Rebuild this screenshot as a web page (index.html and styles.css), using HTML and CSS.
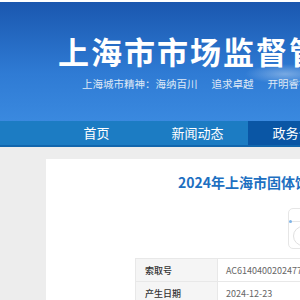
FILE: index.html
```html
<!DOCTYPE html>
<html lang="zh-CN">
<head>
    <meta charset="UTF-8">
    <meta name="viewport" content="width=device-width, initial-scale=1.0">
    <title>上海市市场监督管理局</title>
    <link rel="stylesheet" href="styles.css">
</head>
<body>

    <!-- Banner -->
    <header class="banner">
        <h1 class="site-name">上海市市场监督管理局</h1>
        <p class="motto">上海城市精神：海纳百川<span class="sep"></span>追求卓越<span class="sep"></span>开明睿智<span class="sep"></span>大气谦和</p>
    </header>

    <!-- Main navigation -->
    <nav class="main-nav">
        <a class="nav-item">首页</a>
        <a class="nav-item">新闻动态</a>
        <a class="nav-item active">政务公开</a>
    </nav>

    <!-- Article -->
    <div class="page">
        <div class="card">
            <h2 class="article-title">2024年上海市固体饮料产品质量监督抽查结果</h2>

            <div class="tools">
                <div class="tools-line"></div>
                <div class="tools-circle"></div>
            </div>

            <table class="meta">
                <tr>
                    <td class="label">索取号</td>
                    <td class="value">AC61404002024775</td>
                </tr>
                <tr>
                    <td class="label">产生日期</td>
                    <td class="value">2024-12-23</td>
                </tr>
            </table>
        </div>
    </div>

</body>
</html>
```

FILE: styles.css
```css
/* General body styling */
body {
    margin: 0;
    padding: 0;
    background-color: #ededed;
    font-family: "Noto Sans CJK SC", "Noto Sans", sans-serif;
    overflow: hidden;
    border-top: 2px solid #fff;
}

/* Banner */
.banner {
    height: 119px;
    box-sizing: border-box;
    padding: 33px 0 0 58px;
    background:
        radial-gradient(ellipse 40px 10px at 285px 72px, rgba(255, 255, 255, 0.35), rgba(255, 255, 255, 0)),
        linear-gradient(#1a57af, #2f7bd4 60%, #3a89df);
    white-space: nowrap;
}

.site-name {
    margin: 0;
    font-size: 31px;
    line-height: 32px;
    letter-spacing: 2px;
    font-weight: bold;
    color: #fff;
}

.motto {
    margin: 11px 0 0 24px;
    font-size: 10.5px;
    line-height: 12px;
    color: #dfe9f6;
}

.sep {
    display: inline-block;
    width: 14px;
}

/* Navigation */
.main-nav {
    display: flex;
    height: 24px;
    padding-left: 46px;
    background-color: #1c7cc3;
    border-bottom: 2px solid #1266ad;
    white-space: nowrap;
}

.nav-item {
    flex: 0 0 101px;
    text-align: center;
    line-height: 24px;
    font-size: 13px;
    color: #fff;
}

.nav-item.active {
    background-color: #0a56a5;
}

/* Article card */
.page {
    padding: 12px 0 0 46px;
}

.card {
    background-color: #fff;
    width: 600px;
    height: 400px;
    padding-top: 13px;
}

.article-title {
    margin: 0;
    padding-left: 132px;
    font-size: 14px;
    line-height: 20px;
    font-weight: bold;
    color: #1d6fc1;
    white-space: nowrap;
}

.tools {
    margin: 16px 0 0 242px;
    width: 60px;
    height: 39px;
    border: 1px solid #e6e6e6;
    border-radius: 5px;
}

.tools-line {
    position: relative;
    margin-top: 12px;
    border-top: 1px solid #e6e6e6;
}

.tools-line::before {
    content: "";
    position: absolute;
    left: 0;
    top: -2px;
    width: 3px;
    height: 3px;
    border-radius: 50%;
    background-color: #7fb4e6;
}

.tools-circle {
    margin: 4px 0 0 4px;
    width: 18px;
    height: 18px;
    border: 1px solid #e0e0e0;
    border-radius: 50%;
}

/* Meta table */
.meta {
    margin: 9px 0 0 89px;
    border-collapse: collapse;
    font-size: 9px;
    white-space: nowrap;
}

.meta td {
    height: 22px;
    padding: 0 8px;
    border: 1px solid #e8e8e8;
}

.meta .label {
    width: 64px;
    padding-left: 9px;
    background-color: #f5f5f5;
    color: #333;
    font-weight: 500;
}

.meta .value {
    width: 300px;
    color: #666;
}
```
